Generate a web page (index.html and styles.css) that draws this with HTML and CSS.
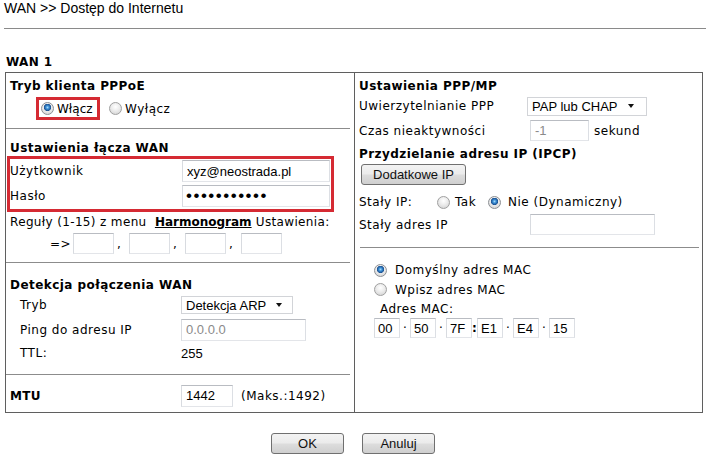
FILE: index.html
```html
<!DOCTYPE html>
<html lang="pl">
<head>
    <meta charset="UTF-8">
    <meta name="viewport" content="width=device-width, initial-scale=1.0">
    <title>WAN - Dostęp do Internetu</title>
    <link rel="stylesheet" href="styles.css">
</head>
<body>
    <div class="title">WAN &gt;&gt; Dostęp do Internetu</div>
    <div class="wan-name">WAN 1</div>

    <div class="wan">
        <div class="col left">
            <div class="sec s-pppoe">
                <div class="head">Tryb klienta PPPoE</div>
                <div class="pick">
                    <label class="mark-radio"><input class="radio" type="radio" name="pppoe" checked>Włącz</label>
                    <label class="opt"><input class="radio" type="radio" name="pppoe">Wyłącz</label>
                </div>
            </div>
            <div class="sep"></div>

            <div class="sec s-link">
                <div class="head">Ustawienia łącza WAN</div>
                <div class="mark-box">
                    <div class="row r-user"><span class="lbl">Użytkownik</span><input class="field w-148" type="text" value="xyz@neostrada.pl"></div>
                    <div class="row r-pass"><span class="lbl">Hasło</span><input class="field w-148 pass" type="password" value="xxxxxxxxxxx"></div>
                </div>
                <div class="line">Reguły (1-15) z menu &nbsp;<a class="link" href="#">Harmonogram</a> Ustawienia:</div>
                <div class="sched">
                    <span class="arrow">=&gt;</span>
                    <input class="field w-40" type="text"><span class="comma">,</span>
                    <input class="field w-40" type="text"><span class="comma">,</span>
                    <input class="field w-40" type="text"><span class="comma">,</span>
                    <input class="field w-40" type="text">
                </div>
            </div>
            <div class="sep"></div>

            <div class="sec s-detect">
                <div class="head">Detekcja połączenia WAN</div>
                <div class="row indent r-mode"><span class="lbl">Tryb</span><span class="select w-112"><span>Detekcja ARP</span><i class="caret"></i></span></div>
                <div class="row indent r-ping"><span class="lbl">Ping do adresu IP</span><input class="field w-125 dim" type="text" value="0.0.0.0"></div>
                <div class="row indent r-ttl"><span class="lbl">TTL:</span><span class="val">255</span></div>
            </div>
            <div class="sep"></div>

            <div class="sec s-mtu">
                <div class="row r-mtu"><span class="lbl bold">MTU</span><input class="field w-52" type="text" value="1442"><span class="hint">(Maks.:1492)</span></div>
            </div>
        </div>

        <div class="col right">
            <div class="sec s-ppp">
                <div class="head">Ustawienia PPP/MP</div>
                <div class="row r-auth"><span class="lbl">Uwierzytelnianie PPP</span><span class="select w-120 shift"><span>PAP lub CHAP</span><i class="caret"></i></span></div>
                <div class="row r-idle"><span class="lbl">Czas nieaktywności</span><input class="field w-58 dim" type="text" value="-1"><span class="unit">sekund</span></div>
                <div class="head h-ipcp">Przydzielanie adresu IP (IPCP)</div>
                <button class="btn btn-extra" type="button">Dodatkowe IP</button>
                <div class="row r-static">
                    <span class="static-lbl">Stały IP:</span>
                    <label class="opt o-yes"><input class="radio" type="radio" name="fixed">Tak</label>
                    <label class="opt o-no"><input class="radio" type="radio" name="fixed" checked>Nie (Dynamiczny)</label>
                </div>
                <div class="row r-addr"><span class="lbl">Stały adres IP</span><input class="field w-125" type="text"></div>
            </div>
            <div class="sep"></div>

            <div class="sec s-mac">
                <label class="opt mac-opt"><input class="radio" type="radio" name="mac" checked>Domyślny adres MAC</label>
                <label class="opt mac-opt"><input class="radio" type="radio" name="mac">Wpisz adres MAC</label>
                <div class="mac-lbl">Adres MAC:</div>
                <div class="mac">
                    <input class="field w-26" type="text" value="00"><span class="dot">·</span>
                    <input class="field w-26" type="text" value="50"><span class="dot">·</span>
                    <input class="field w-26" type="text" value="7F"><span class="colon">:</span>
                    <input class="field w-26" type="text" value="E1"><span class="dot">·</span>
                    <input class="field w-26" type="text" value="E4"><span class="dot">·</span>
                    <input class="field w-26" type="text" value="15">
                </div>
            </div>
        </div>
    </div>

    <div class="actions">
        <button class="btn btn-main" type="button">OK</button>
        <button class="btn btn-main" type="button">Anuluj</button>
    </div>
</body>
</html>
```

FILE: styles.css
```css
* {
    box-sizing: border-box;
}

body {
    margin: 0;
    font-family: "DejaVu Sans", Verdana, sans-serif;
    font-size: 12px;
    letter-spacing: 0.5px;
    color: #000;
    background-color: #fff;
}

.title {
    margin-left: 4px;
    height: 29px;
    border-bottom: 1px solid #8a8a8a;
    font: 14px/17px "Liberation Sans", Arial, sans-serif;
    letter-spacing: 0;
    color: #000;
}

.wan-name {
    margin: 26px 0 0 6px;
    font-weight: bold;
    line-height: 14px;
    letter-spacing: 0.4px;
}

.wan {
    margin: 3px 0 0 5px;
    width: 698px;
    height: 341px;
    border: 1px solid #5f5f5f;
    display: grid;
    grid-template-columns: 349px 347px;
}

.left {
    border-right: 1px solid #5f5f5f;
}

.sep {
    height: 0;
    border-top: 1px solid #8c8c8c;
}

.left .sep {
    margin-right: 4px;
}

.right .sep {
    margin: 0 3px 0 5px;
}

.head {
    font-weight: bold;
    line-height: 16px;
    padding-left: 4px;
    letter-spacing: 0.45px;
}

.row {
    display: flex;
    align-items: center;
    padding-left: 4px;
}

.lbl {
    width: 171px;
    flex-shrink: 0;
}

.bold {
    font-weight: bold;
    letter-spacing: 0.3px;
}

/* inputs */
.field {
    height: 22px;
    margin: 0;
    padding: 0 4px;
    border: 1px solid;
    border-color: #b9bcc2 #dcdfe4 #e3e5e9 #d8dbe0;
    font: 13px "Liberation Sans", Arial, sans-serif;
    letter-spacing: 0;
    color: #000;
    background-color: #fff;
    outline: none;
}

.dim {
    color: #8a8a8a;
}

.pass {
    font-size: 17px;
    letter-spacing: 1.5px;
    padding-left: 3px;
}

.w-26 { width: 26px; height: 21px; padding: 0 3px; }
.w-40 { width: 41px; height: 21px; }
.w-52 { width: 52px; }
.w-58 { width: 59px; height: 21px; }
.w-125 { width: 125px; }
.w-148 { width: 148px; }

.select {
    display: flex;
    align-items: center;
    height: 19px;
    padding-left: 4px;
    border: 1px solid #d2d4d8;
    background-color: #fff;
    font: 13px "Liberation Sans", Arial, sans-serif;
    letter-spacing: 0;
}

.w-112 { width: 112px; height: 18px; }
.w-120 { width: 120px; }

.shift {
    margin-left: -3px;
}

.caret {
    margin-left: 10px;
    width: 0;
    height: 0;
    border-left: 3.5px solid transparent;
    border-right: 3.5px solid transparent;
    border-top: 4px solid #111;
}

/* radios */
.radio {
    appearance: none;
    -webkit-appearance: none;
    width: 13px;
    height: 13px;
    margin: 0;
    flex-shrink: 0;
    border-radius: 50%;
    border: 1px solid #a0a0a0;
    background: radial-gradient(circle at 50% 35%, #ffffff 0, #ececec 45%, #cdcdcd 100%);
}

.radio:checked {
    border-color: #8c8f94;
    background:
        radial-gradient(circle at 50% 40%, #a9dcfa 0, #3a8fd6 1.6px, #1b4f8f 3.4px, rgba(27, 79, 143, 0) 3.9px),
        radial-gradient(circle at 50% 35%, #ffffff 0, #ececec 45%, #cdcdcd 100%);
}

.opt {
    display: flex;
    align-items: center;
}

/* left column */
.s-pppoe {
    height: 55px;
    padding-top: 5px;
}

.pick {
    display: flex;
    align-items: center;
    margin-top: 3px;
    height: 23px;
}

.mark-radio {
    display: flex;
    align-items: center;
    margin-left: 30px;
    width: 64px;
    height: 23px;
    border: 3px solid #d52a33;
    letter-spacing: 0;
}

.mark-radio .radio {
    margin: 0 3px 0 2px;
}

.pick .opt .radio {
    margin: 0 3px 0 9px;
}

.s-link {
    height: 133px;
    padding-top: 11px;
}

.mark-box {
    margin-left: 1px;
    width: 327px;
    height: 56px;
    border: 3px solid #d52a33;
}

.mark-box .row {
    padding-left: 0;
}

.mark-box .lbl {
    width: 172px;
}

.r-user { height: 24px; }
.r-pass { height: 26px; }

.line {
    margin-top: 2px;
    line-height: 16px;
    padding-left: 4px;
    letter-spacing: 0.35px;
}

.link {
    color: #000;
    font-weight: bold;
    letter-spacing: 0;
    text-decoration: underline;
}

.sched {
    display: flex;
    align-items: center;
    margin-top: 3px;
    height: 21px;
    padding-left: 44px;
}

.arrow {
    width: 23px;
}

.comma {
    width: 15px;
    padding-left: 3px;
}

.s-detect {
    height: 111px;
    padding-top: 14px;
}

.indent {
    padding-left: 14px;
}

.indent .lbl {
    width: 161px;
}

.r-mode { height: 24px; }
.r-ping { height: 25px; }
.r-ttl { height: 22px; }

.val {
    font: 13px "Liberation Sans", Arial, sans-serif;
    letter-spacing: 0;
}

.s-mtu {
    height: 37px;
    padding-top: 4px;
}

.r-mtu {
    height: 33px;
}

.hint {
    margin-left: 8px;
}

/* right column */
.s-ppp {
    height: 174px;
    padding-top: 5px;
}

.r-auth { height: 24px; }
.r-idle { height: 25px; }

.unit {
    margin-left: 5px;
}

.h-ipcp {
    margin-top: 3px;
}

.btn {
    height: 21px;
    padding: 0;
    border: 1px solid #707070;
    border-radius: 3px;
    background: linear-gradient(#f3f3f3 0%, #ebebeb 48%, #dddddd 52%, #cfcfcf 100%);
    font: 13px "Liberation Sans", Arial, sans-serif;
    letter-spacing: 0;
    color: #111;
}

.btn-extra {
    display: block;
    margin: 2px 0 0 6px;
    width: 105px;
}

.r-static {
    margin-top: 6px;
    height: 22px;
}

.static-lbl {
    width: 78px;
    flex-shrink: 0;
}

.o-yes {
    width: 51px;
}

.o-yes .radio {
    margin-right: 5px;
}

.o-no .radio {
    margin-right: 7px;
}

.r-addr {
    height: 23px;
}

.r-addr .field {
    height: 21px;
}

.s-mac {
    height: 164px;
    padding: 12px 0 0 19px;
}

.mac-opt {
    height: 20px;
}

.mac-opt + .mac-opt {
    height: 19px;
}

.mac-opt .radio {
    margin-right: 8px;
}

.mac-lbl {
    margin: 2px 0 0 6px;
    line-height: 17px;
}

.mac {
    display: flex;
    align-items: center;
    height: 20px;
}

.mac .field {
    height: 20px;
}

.dot {
    width: 10px;
    text-align: center;
    letter-spacing: 0;
}

.colon {
    width: 5px;
    text-align: center;
    font-weight: bold;
    letter-spacing: 0;
}

/* bottom buttons */
.actions {
    display: flex;
    justify-content: center;
    gap: 18px;
    margin-top: 20px;
}

.btn-main {
    width: 73px;
}
```
